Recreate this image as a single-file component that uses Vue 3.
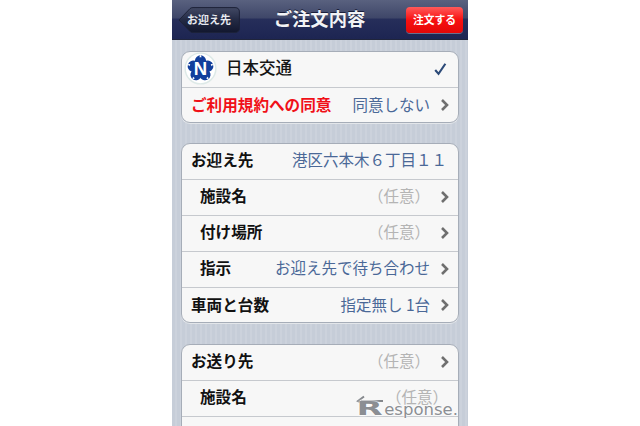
<script setup>
const first = [
  { label: '施設名', value: '（任意）', kind: 'muted', sub: true, chevron: true },
  { label: '付け場所', value: '（任意）', kind: 'muted', sub: true, chevron: true },
  { label: '指示', value: 'お迎え先で待ち合わせ', kind: 'blue', sub: true, chevron: true },
  { label: '車両と台数', value: '指定無し 1台', kind: 'blue', sub: false, chevron: true }
]
const second = [
  { label: 'お送り先', value: '（任意）', kind: 'muted', sub: false, chevron: true },
  { label: '施設名', value: '（任意）', kind: 'muted', sub: true, chevron: false },
  { label: '', value: '', kind: 'muted', sub: true, chevron: false }
]
const petals = [0, 72, 144, 216, 288]
</script>

<template>
  <div class="page">
    <div class="phone">
      <header class="nav">
        <div class="back">
          <svg class="back-shape" viewBox="0 0 62 26" aria-hidden="true">
            <defs>
              <linearGradient id="backFill" x1="0" y1="0" x2="0" y2="1">
                <stop offset="0" stop-color="#424964" />
                <stop offset="0.5" stop-color="#232a44" />
                <stop offset="1" stop-color="#12172e" />
              </linearGradient>
            </defs>
            <path d="M1 13 L12 1.6 Q13 .6 15 .6 H57 Q61.4 .6 61.4 5 V21 Q61.4 25.4 57 25.4 H15 Q13 25.4 12 24.4 Z" fill="url(#backFill)" stroke="#1c2238" stroke-width="1" />
          </svg>
          <span>お迎え先</span>
        </div>
        <h1 class="title">ご注文内容</h1>
        <div class="order">注文する</div>
      </header>
      <main class="content">
        <section class="group">
          <div class="row company">
            <svg class="logo" viewBox="0 0 32 32" aria-hidden="true">
              <circle cx="16" cy="16" r="15.6" fill="#dde9e7" />
              <circle cx="16" cy="16" r="14.2" fill="#fff" />
              <g fill="#123f9c">
                <circle cx="16" cy="16" r="7.5" />
                <g v-for="a in petals" :key="a" :transform="`rotate(${a} 16 16)`">
                  <circle cx="16" cy="8.6" r="5.4" />
                  <path d="M16 2.4 L14.9 5.2 H17.1 Z" fill="#fff" />
                </g>
              </g>
              <text x="16" y="22.4" text-anchor="middle" class="logo-n">N</text>
            </svg>
            <span class="label name">日本交通</span>
            <svg class="check" viewBox="0 0 16 16" aria-hidden="true">
              <path d="M1.5 9.2 L5.6 14 L14 1.5" fill="none" stroke="#2c4a78" stroke-width="2.6" />
            </svg>
          </div>
          <div class="row">
            <span class="label red">ご利用規約への同意</span>
            <span class="value blue">同意しない</span>
            <svg class="chevron" viewBox="0 0 10 14" aria-hidden="true">
              <path d="M2 2 L7 7 L2 12" fill="none" stroke="#6f6f6f" stroke-width="2.6" />
            </svg>
          </div>
        </section>

        <section class="group">
          <div class="row address">
            <span class="label">お迎え先</span>
            <span class="value blue">港区六本木６丁目１１</span>
          </div>
          <div v-for="item in first" :key="item.label" class="row" :class="{ sub: item.sub }">
            <span class="label">{{ item.label }}</span>
            <span class="value" :class="item.kind">{{ item.value }}</span>
            <svg v-if="item.chevron" class="chevron" viewBox="0 0 10 14" aria-hidden="true">
              <path d="M2 2 L7 7 L2 12" fill="none" stroke="#6f6f6f" stroke-width="2.6" />
            </svg>
          </div>
        </section>

        <section class="group third">
          <div v-for="(item, i) in second" :key="i" class="row" :class="{ sub: item.sub }">
            <span class="label">{{ item.label }}</span>
            <span class="value" :class="[item.kind, { shifted: !item.chevron }]">{{ item.value }}</span>
            <svg v-if="item.chevron" class="chevron" viewBox="0 0 10 14" aria-hidden="true">
              <path d="M2 2 L7 7 L2 12" fill="none" stroke="#6f6f6f" stroke-width="2.6" />
            </svg>
          </div>
        </section>
      </main>
      <div class="mark">
        <svg class="mark-arrow" viewBox="0 0 30 10" aria-hidden="true">
          <path d="M28 6 H6 M9 1.5 L3 6 L9 9" fill="none" stroke="#84878c" stroke-width="2" />
        </svg>
        <span class="mark-r">R</span><span>esponse.</span>
      </div>
    </div>
  </div>
</template>

<style>
html, body { margin: 0; background: #fff; }
</style>

<style scoped>
.page {
  width: 640px;
  height: 426px;
  overflow: hidden;
  display: flex;
  justify-content: center;
  background: #fff;
  font-family: "Noto Sans CJK JP", "Noto Sans", sans-serif;
}
.phone {
  position: relative;
  width: 296px;
  height: 426px;
  overflow: hidden;
  background: repeating-linear-gradient(90deg, #c6cdd8 0 3px, #ccd2dc 3px 5px);
}
.nav {
  height: 40px;
  box-sizing: border-box;
  display: flex;
  align-items: center;
  justify-content: space-between;
  padding: 0 5px 0 6px;
  background: linear-gradient(#59617f 0, #3f4769 45%, #262e5a 50%, #1d2552 100%);
  border-bottom: 1px solid #20253c;
}
.back {
  position: relative;
  width: 62px;
  height: 26px;
  display: flex;
  align-items: center;
  justify-content: center;
  color: #e8eaf0;
  font-size: 11px;
  font-weight: 700;
}
.back-shape {
  position: absolute;
  inset: 0;
  width: 62px;
  height: 26px;
}
.back span { position: relative; margin-bottom: 2px; }
.title {
  margin: 0 7px 4px 0;
  color: #f2f3f6;
  font-size: 18.3px;
  font-weight: 700;
  text-shadow: 0 -1px 0 #1a1f3a;
}
.order {
  width: 57px;
  height: 26px;
  padding-bottom: 2px;
  box-sizing: border-box;
  display: flex;
  align-items: center;
  justify-content: center;
  color: #fff;
  font-size: 10.8px;
  font-weight: 700;
  border-radius: 4px;
  background: linear-gradient(#ff5a5a, #f81010 50%, #e40808);
  box-shadow: 0 1px 0 #6a7090;
}
.content {
  display: flex;
  flex-direction: column;
  gap: 20px;
  padding: 11px 9px 0;
}
.group {
  border: 1px solid #a6adb8;
  border-radius: 9px;
  background: #f7f7f7;
  overflow: hidden;
  box-shadow: 0 1px 0 #e3e6ea;
}
.third { margin-top: 1px; }
.row {
  box-sizing: border-box;
  height: 36px;
  display: flex;
  align-items: center;
  padding: 0 8px 2px 9px;
  border-bottom: 1px solid #c6c9ce;
}
.row:last-child { border-bottom: 0; height: 34px; padding-bottom: 0; }
.row:last-child .label,
.row:last-child .value { margin-bottom: 3px; }
.sub { padding-left: 18px; }
.label {
  flex: 1;
  min-width: 0;
  white-space: nowrap;
  color: #111;
  font-size: 15.6px;
  font-weight: 700;
  margin-bottom: 4px;
}
.red { color: #f01018; }
.value { font-size: 15.5px; white-space: nowrap; margin-bottom: 4px; }
.blue { color: #4a6897; }
.muted { color: #b4b4b4; }
.chevron { width: 10px; height: 14px; margin-left: 10px; flex: none; }
.address { padding-right: 11px; }
.company { padding-left: 2px; padding-right: 11px; }
.company .name { margin-left: 9px; color: #151515; font-size: 16.5px; font-weight: 500; }
.logo { width: 33px; height: 33px; flex: none; }
.logo-n { fill: #fff; font-family: "Liberation Sans", sans-serif; font-size: 18px; font-weight: 700; }
.check { width: 13px; height: 14px; }
.shifted { margin-right: 2px; }
.mark {
  position: absolute;
  right: 10px;
  bottom: 6px;
  display: flex;
  align-items: baseline;
  color: #8b8e93;
  font-family: "DejaVu Sans", sans-serif;
  font-size: 16.5px;
  line-height: 20px;
  text-shadow: 0 0 2px #fff, 0 0 2px #fff;
}
.mark-arrow {
  position: absolute;
  left: 0;
  top: -3px;
  width: 30px;
  height: 10px;
}
.mark-r { font-size: 20px; font-weight: 700; transform: scaleX(1.7); margin: 0 7px 0 7px; }
</style>
